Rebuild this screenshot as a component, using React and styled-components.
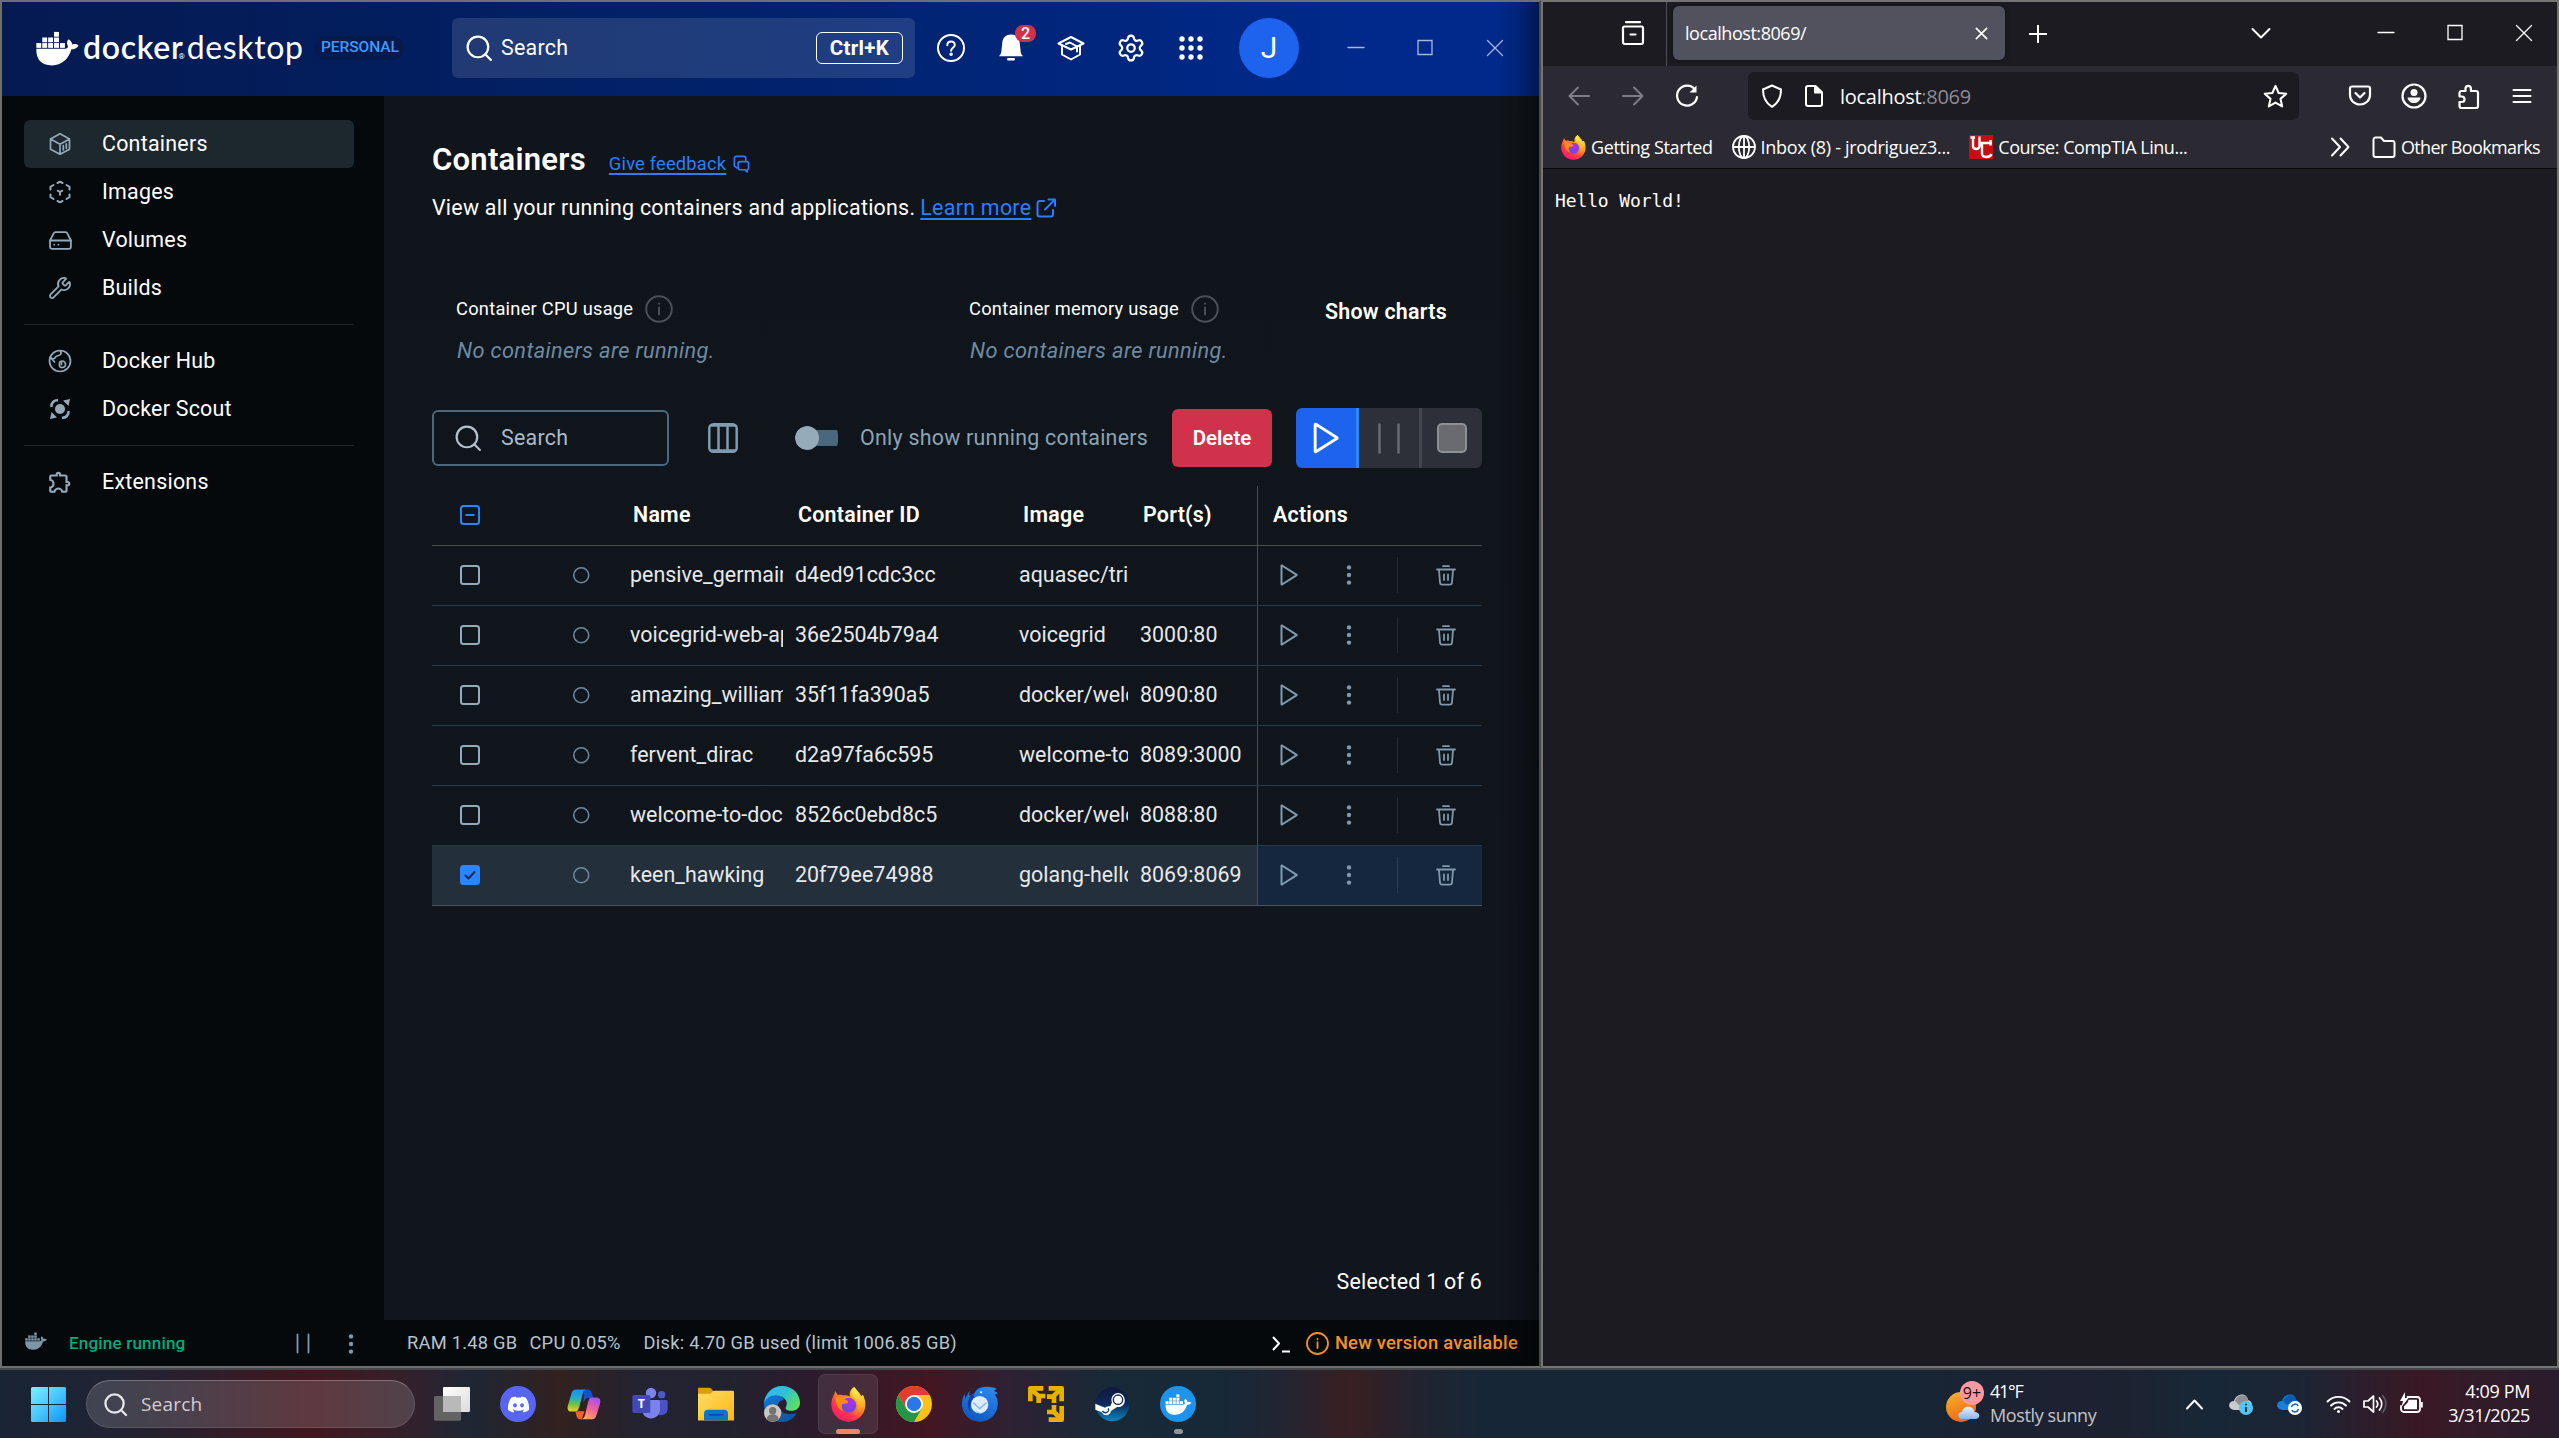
import React from "react";
import styled, { createGlobalStyle, css } from "styled-components";
import { Settings, HardDrive, Wrench } from "lucide-react";
import { MdOutlineExtension } from "react-icons/md";
import { FaDiscord } from "react-icons/fa";

const Global = createGlobalStyle`
  *, *::before, *::after { box-sizing: border-box; }
  html, body { margin: 0; padding: 0; background: #1c1b22; overflow: hidden; }
  svg { display: block; flex: none; overflow: visible; }
`;

const roboto = `Roboto, "Liberation Sans", sans-serif`;
const segoe = `"Open Sans", "Noto Sans", sans-serif`;

const Desktop = styled.div`
  width: 2559px;
  height: 1438px;
  display: grid;
  grid-template-columns: 1541px 1018px;
  grid-template-rows: 1368px 70px;
  overflow: hidden;
`;

const Label = styled.span`
  margin: 0;
  font-family: ${roboto};
  font-size: ${(p) => p.$size || 21.4}px;
  font-weight: ${(p) => p.$weight || 400};
  letter-spacing: ${(p) => (p.$track === undefined ? 0.25 : p.$track)}px;
  color: ${(p) => p.$color || "#fff"};
  line-height: 1;
  white-space: nowrap;
  font-style: ${(p) => (p.$italic ? "italic" : "normal")};
`;

const UiText = styled(Label)`
  font-family: ${segoe};
  font-size: ${(p) => p.$size || 18}px;
  letter-spacing: ${(p) => (p.$track === undefined ? -0.38 : p.$track)}px;
`;

/* ---------- Docker Desktop window ---------- */

const DockerWindow = styled.section`
  position: relative;
  display: grid;
  grid-template-rows: 94px 1224px 46px;
  border: 2px solid #6f6f6f;
  border-right-color: #4a4a4a;
  background: #05090c;
  &::after {
    content: "";
    position: absolute;
    inset: 0 0 0 auto;
    width: 44px;
    background: linear-gradient(to right, rgba(0, 0, 0, 0), rgba(0, 0, 0, 0.12) 50%, rgba(0, 0, 0, 0.42));
    pointer-events: none;
  }
`;

const TitleBar = styled.header`
  display: flex;
  align-items: center;
  padding-bottom: 2px;
  background: linear-gradient(to right, #051a50, #01226c 50%, #00298b 88%, #00298b);
`;

const Brand = styled.div`
  width: 450px;
  height: 60px;
  padding-left: 34px;
  display: flex;
  align-items: center;
`;

const Wordmark = styled.div`
  display: flex;
  align-items: baseline;
  margin: -3px 0 0 4px;
  color: #fff;
  font: 400 32px/1 Lato, sans-serif;
  letter-spacing: 0.6px;
  b { font-weight: 600; letter-spacing: 0.7px; }
  i { font: 400 8px/1 ${roboto}; margin: 0 2px 0 -5px; letter-spacing: 0; }
`;

const PlanPill = styled.div`
  margin-left: 12px;
  width: 89px;
  height: 24px;
  border-radius: 12px;
  background: #061a4b;
  display: flex;
  align-items: center;
  justify-content: center;
`;

const GlobalSearch = styled.div`
  width: 463px;
  height: 60px;
  padding: 0 12px 0 14px;
  border-radius: 6px;
  background: rgba(255, 255, 255, 0.12);
  display: flex;
  align-items: center;
  gap: 9px;
`;

const Shortcut = styled.kbd`
  margin-left: auto;
  width: 87px;
  height: 32px;
  border: 1.5px solid #fff;
  border-radius: 6px;
  display: flex;
  align-items: center;
  justify-content: center;
`;

const IconStrip = styled.div`
  display: flex;
  margin-left: 6px;
`;

const IconSlot = styled.div`
  position: relative;
  width: ${(p) => p.$width || 60}px;
  height: 40px;
  flex: none;
  display: flex;
  align-items: center;
  justify-content: center;
`;

const CountBadge = styled.div`
  position: absolute;
  left: 34px;
  top: -3px;
  width: 21px;
  height: 17px;
  border-radius: 8px;
  background: #d1324b;
  display: flex;
  align-items: center;
  justify-content: center;
`;

const Avatar = styled.div`
  width: 60px;
  height: 60px;
  margin: 0 22px 0 18px;
  border-radius: 50%;
  background: #1d63ed;
  display: flex;
  align-items: center;
  justify-content: center;
`;

const Body = styled.div`
  display: grid;
  grid-template-columns: 382px 1fr;
  min-height: 0;
`;

const Sidebar = styled.nav`
  padding: 24px 30px 0 22px;
`;

const NavItem = styled.div`
  height: 48px;
  padding-left: 24px;
  display: flex;
  align-items: center;
  gap: 30px;
  border-radius: 6px;
  color: #93a9ba;
  background: ${(p) => (p.$active ? "#1d272e" : "transparent")};
`;

const NavGlyph = styled.span`
  width: 24px;
  height: 24px;
  display: flex;
  align-items: center;
  justify-content: center;
`;

const NavDivider = styled.hr`
  height: 1px;
  margin: 12px 0;
  border: 0;
  background: #20262a;
`;

const Main = styled.main`
  display: flex;
  flex-direction: column;
  padding: 48px 57px 28px 48px;
  background: linear-gradient(#10151b, #11151d);
`;

const HeadingRow = styled.div`
  display: flex;
  align-items: baseline;
  height: 31px;
`;

const LinkText = styled(Label)`
  color: #2a7eff;
  text-decoration: underline;
  text-decoration-thickness: 1.5px;
  text-underline-offset: 3px;
`;

const FeedbackLink = styled.a`
  display: flex;
  align-items: center;
  gap: 6px;
  margin-left: 23px;
`;

const Subtitle = styled.div`
  margin-top: 22px;
  height: 21px;
  display: flex;
  align-items: center;
`;

const SubtitleLink = styled(LinkText)`
  margin: 0 5px 0 5px;
`;

const Stats = styled.div`
  margin-top: 77px;
  padding-left: 24px;
  display: grid;
  grid-template-columns: 513px 356px auto;
  align-items: start;
`;

const StatLabel = styled.div`
  height: 28px;
  display: flex;
  align-items: center;
  gap: 12px;
  margin-bottom: 17px;
`;

const StatBody = styled.div`
  display: flex;
  flex-direction: column;
  height: 66px;
`;

const EmptyNote = styled(Label)`
  padding-left: 1px;
`;

const ShowCharts = styled.button`
  padding: 6px 0 0;
  border: 0;
  background: none;
  text-align: left;
  line-height: 1;
  font-size: 21px;
`;

const Tools = styled.div`
  margin-top: 47px;
  height: 60px;
  display: flex;
  align-items: center;
`;

const TableSearch = styled.div`
  width: 237px;
  height: 56px;
  margin-right: 39px;
  padding-left: 21px;
  border: 2px solid #4a687e;
  border-radius: 6px;
  display: flex;
  align-items: center;
  gap: 20px;
`;

const Toggle = styled.div`
  width: 43px;
  height: 24px;
  margin: 0 22px 0 57px;
  display: flex;
  align-items: center;
  background: linear-gradient(#4a677e, #4a677e) right center / 34px 16px no-repeat;
  clip-path: inset(0 0 0 0 round 12px 8px 8px 12px);
  &::before {
    content: "";
    width: 24px;
    height: 24px;
    border-radius: 50%;
    background: #96abba;
  }
`;

const DeleteButton = styled.button`
  margin: 0 24px 0 auto;
  width: 100px;
  height: 58px;
  border: 0;
  border-radius: 6px;
  background: #d1324b;
  padding: 0;
`;

const RunGroup = styled.div`
  width: 186px;
  height: 60px;
  display: flex;
  border-radius: 6px;
  overflow: hidden;
`;

const RunButton = styled.div`
  flex: ${(p) => (p.$last ? "0 0 60px" : "0 0 63px")};
  display: flex;
  align-items: center;
  justify-content: center;
  background: ${(p) => (p.$primary ? "#1d63ed" : "#2d3038")};
  border-right: ${(p) => (p.$last ? "0" : p.$primary ? "3px solid #2e86ff" : "3px solid #42454c")};
`;

const Table = styled.div`
  margin-top: 18px;
`;

const gridRow = css`
  display: grid;
  grid-template-columns: 141px 57px 165px 224px 121px 117px 225px;
  height: 60px;
`;

const HeadRow = styled.div`
  ${gridRow}
  border-bottom: 1px solid #4a4f50;
`;

const Row = styled.div`
  ${gridRow}
  border-bottom: 1px solid ${(p) => (p.$selected ? "#4a5459" : "#253d4b")};
  background: ${(p) => (p.$selected ? "#232f3a" : "transparent")};
`;

const Cell = styled.div`
  display: flex;
  align-items: center;
  overflow: hidden;
  padding: 0 0 1px ${(p) => p.$indent || 0}px;
  margin-right: ${(p) => p.$clip || 0}px;
`;

const CheckCell = styled(Cell)`
  padding-left: 28px;
`;

const ActionCell = styled.div`
  display: flex;
  align-items: center;
  padding: 0 0 1px ${(p) => (p.$head ? 15 : 22)}px;
  border-left: 1px solid #484c4e;
  background: ${(p) => (p.$selected ? "#15263f" : "transparent")};
`;

const ActionPlay = styled.div`
  margin-right: 48px;
`;

const ActionRule = styled.div`
  width: 1px;
  height: 36px;
  margin: 0 38px 0 45px;
  background: ${(p) => (p.$selected ? "#2a3b4d" : "#222b30")};
`;

const Checkbox = styled.div`
  width: 20px;
  height: 20px;
  border-radius: 3.5px;
  border: 2px solid ${(p) => (p.$state === "off" ? "#96abba" : "#2a86ff")};
  background: ${(p) => (p.$state === "on" ? "#2a86ff" : "transparent")};
  display: flex;
  align-items: center;
  justify-content: center;
`;

const DataText = styled(Label).attrs({ $track: 0.02, $color: "#e6e9eb" })`
  line-height: 28px;
`;

const SelectedCount = styled.div`
  margin-top: auto;
  align-self: flex-end;
  display: flex;
`;

const StatusBar = styled.footer`
  display: grid;
  grid-template-columns: 382px 1fr;
  padding-top: 1px;
`;

const EngineStatus = styled.div`
  display: flex;
  align-items: center;
  padding-left: 23px;
  & > span { margin: 0 111px 0 22px; }
  & > svg:first-child { margin-top: -6px; }
`;

const ResourceStatus = styled.div`
  display: flex;
  align-items: center;
  padding: 0 21px 0 23px;
`;

const Metric = styled(Label)`
  margin-right: ${(p) => p.$gap}px;
`;

const UpdateNotice = styled.div`
  margin-left: auto;
  display: flex;
  align-items: center;
`;

const GroupGap = styled.div`
  display: flex;
  align-items: center;
  gap: 38px;
`;

const NoticeIcons = styled.div`
  display: flex;
  align-items: center;
  gap: 15px;
  margin-right: 6px;
`;

/* ---------- Firefox window ---------- */

const BrowserWindow = styled.section`
  display: grid;
  grid-template-rows: 64px 60px 43px 1fr;
  border: 2px solid #747474;
  background: #1c1b22;
`;

const TabBar = styled.div`
  display: flex;
  align-items: center;
  min-width: 0;
`;

const ViewButton = styled.div`
  width: 124px;
  height: 64px;
  padding: 0 0 2px 78px;
  display: flex;
  align-items: center;
  border-right: 1px solid #4f4e57;
`;

const Tab = styled.div`
  width: 332px;
  height: 54px;
  margin: 0 24px 2px 6px;
  padding: 0 18px 0 12px;
  border-radius: 6px;
  background: #52525e;
  box-shadow: 0 0 5px rgba(0, 0, 0, 0.5);
  display: flex;
  align-items: center;
  justify-content: space-between;
`;

const TabBarEnd = styled.div`
  margin: 0 -1px 2px auto;
  display: flex;
  align-items: center;
  & > svg { margin-right: 81px; }
`;

const NavBar = styled.div`
  display: flex;
  align-items: center;
  padding-left: 9px;
  background: #2b2a33;
`;

const UrlBar = styled.div`
  width: 551px;
  height: 48px;
  margin: 0 34px;
  padding: 0 11px 0 12px;
  border-radius: 6px;
  background: #1c1b22;
  display: flex;
  align-items: center;
  & > svg:last-child { margin-left: auto; }
`;

const LocationIcons = styled.div`
  display: flex;
  gap: 18px;
`;

const UrlText = styled(UiText)`
  margin: 2px 0 0 14px;
  span { color: #8c8b92; }
`;

const BookmarkBar = styled.div`
  display: flex;
  align-items: center;
  gap: 19px;
  padding: 0 17px 0 18px;
  background: #2b2a33;
  border-bottom: 1px solid #0b0b0e;
`;

const Bookmark = styled.div`
  display: flex;
  align-items: center;
  gap: 5px;
`;

const BookmarkEnd = styled.div`
  margin-left: auto;
  display: flex;
  align-items: center;
  gap: 22px;
`;

const Page = styled.pre`
  margin: 0;
  padding: 23px 12px;
  color: #fff;
  font: 400 18px/1 "DejaVu Sans Mono", monospace;
  letter-spacing: -0.12px;
`;

/* ---------- Taskbar ---------- */

const Taskbar = styled.footer`
  grid-column: 1 / -1;
  display: flex;
  align-items: center;
  padding: 0 29px 0 31px;
  border-top: 2px solid #45484d;
  background: linear-gradient(to right,
    #192435 0px, #202333 110px, #2c1f2c 190px, #43171f 310px, #35202a 400px,
    #1f2635 470px, #32211f 560px, #232332 640px, #22222f 730px, #2c1b2c 810px,
    #431622 930px, #2d2133 1010px, #182938 1110px, #172837 1220px, #222533 1280px,
    #381f22 1350px, #24232f 1410px, #172636 1480px, #162636 1900px, #1e2131 2060px,
    #1d2231 2120px, #172737 2210px, #1c2434 2300px, #3a1824 2420px, #321b29 2480px, #291c2c 2559px);
`;

const TaskSearch = styled.div`
  width: 329px;
  height: 48px;
  margin: 0 4px 0 20px;
  padding-left: 17px;
  border-radius: 24px;
  border: 1px solid rgba(255, 255, 255, 0.1);
  border-top-color: rgba(255, 255, 255, 0.25);
  background: rgba(255, 255, 255, 0.15);
  display: flex;
  align-items: center;
  gap: 14px;
`;

const TaskSlot = styled.div`
  position: relative;
  width: 66px;
  height: 60px;
  display: flex;
  align-items: center;
  justify-content: center;
  &::before {
    content: "";
    display: ${(p) => (p.$active ? "block" : "none")};
    position: absolute;
    inset: 0 3px;
    border-radius: 7px;
    border: 1px solid rgba(255, 255, 255, 0.07);
    background: rgba(255, 255, 255, 0.09);
  }
  &::after {
    content: "";
    display: ${(p) => (p.$active || p.$open ? "block" : "none")};
    position: absolute;
    bottom: 0;
    width: ${(p) => (p.$active ? 24 : 9)}px;
    height: 5px;
    border-radius: 3px;
    background: ${(p) => (p.$active ? "#f3836c" : "#8e959e")};
  }
  svg { position: relative; }
`;

const AppBadge = styled.div`
  width: 36px;
  height: 36px;
  border-radius: 50%;
  background: ${(p) => p.$color};
  color: #fff;
  display: flex;
  align-items: center;
  justify-content: center;
`;

const Weather = styled.div`
  margin-left: 735px;
  display: flex;
  align-items: center;
  gap: 4px;
`;

const TwoLines = styled.div`
  display: flex;
  flex-direction: column;
  align-items: ${(p) => (p.$end ? "flex-end" : "flex-start")};
  margin-top: -2px;
  & > span { line-height: 24px; }
`;

const Tray = styled.div`
  margin-left: auto;
  display: flex;
  align-items: center;
  & > svg { margin-right: 12px; }
  & > svg:nth-child(1) { margin-right: 26px; }
  & > svg:nth-child(2) { margin-right: 23px; }
  & > svg:nth-child(3) { margin-right: 24px; }
  & > svg:nth-child(6) { margin-right: 24px; }
`;

/* ---------- Icons ---------- */

const Line = ({ w = 24, h, vb = "0 0 24 24", s = 2, c = "#fff", children }) => (
  <svg width={w} height={h || w} viewBox={vb} fill="none" stroke={c} strokeWidth={s} strokeLinecap="round" strokeLinejoin="round">
    {children}
  </svg>
);

const Whale = ({ w = 43, h = 35, c = "#fff" }) => (
  <svg width={w} height={h} viewBox="47 58 131 105" fill={c}>
    {[[102, 60], [66, 77], [84, 77], [102, 77], [48, 94], [66, 94], [84, 94], [102, 94], [120, 94]].map(([x, y]) => (
      <rect key={`${x}-${y}`} x={x} y={y} width="15" height="14.5" />
    ))}
    <path d="M48 111.500H133C142 111 147 108 143 100C140 93 141 87 147 82C153 87 157 92 157 98C163 96 171 97 177 101C172 110 163 113 155 113C146 143 125 162 96 162C62 162 47 143 48 111.500Z" />
  </svg>
);

const SearchIcon = ({ size = 26, c = "#fff", s = 2 }) => (
  <Line w={size} c={c} s={s}><circle cx="11" cy="11" r="9.500" /><path d="M18 18l5 5" /></Line>
);
const BoxIcon = () => (
  <Line c="currentColor" s="1.700">
    <path d="M12 1.800L21.500 7v10.200L12 22.300 2.500 17.200V7zM2.500 7L12 12.200 21.500 7M12 12.200v10M15.300 13.500v4.500M18.300 11.800v4.500" />
  </Line>
);
const ImageIcon = () => (
  <Line c="currentColor" s="2">
    <path d="M9.500 3L12 1.700 14.500 3M18.500 5L21.500 6.800V9.500M21.500 14.500v2.700L18.500 19M14.500 21L12 22.300 9.500 21M5.500 19L2.500 17.200v-2.700M2.500 9.500V6.800L5.500 5M9.700 10.700L12 12l2.300-1.300M12 12v2.800" />
  </Line>
);
const HubIcon = () => (
  <Line c="currentColor" s="1.700">
    <circle cx="12" cy="12" r="10.500" /><path d="M2 8.500c3 2.500 5 1 5.500-.5S11 7 12.500 5.500 12.500 2.500 12 1.800M3 9l3.500 4M11.500 13.500c1-1.800 3.500-2 5-.5s1.500 4-.5 5-4.500.500-4.500-1.500z" /><path d="M13.500 13v2.500" />
  </Line>
);
const ScoutIcon = () => (
  <svg width="24" height="24" viewBox="0 0 24 24" fill="currentColor">
    <circle cx="12" cy="12" r="5" /><path d="M22 2l-1.500 7-5.500-5.500zM2 22l1.500-7L9 20.500z" />
    <path d="M3.500 10C3 6 6 3 10 3.200M20.500 14c.500 4-2.500 7-6.500 6.800" fill="none" stroke="currentColor" strokeWidth="2.600" />
  </svg>
);
const HelpIcon = () => (
  <Line w={28} vb="0 0 28 28" s="2"><circle cx="14" cy="14" r="13" /><path d="M10.300 11.200c0-5 7.600-4.800 7.500-.3 0 2.800-3.700 2.900-3.700 5.800" /><circle cx="14.100" cy="20.300" r=".8" fill="#fff" /></Line>
);
const BellIcon = () => (
  <svg width="26" height="28" viewBox="0 0 26 28" fill="#fff">
    <path d="M13 .5c5 0 8.200 3.200 8.700 8l1 9.500c.300 2 1.300 3 2.300 4.300H1C2 21 3 20 3.300 18l1-9.500C4.800 3.700 8 .5 13 .5z" /><rect x="9" y="24" width="8" height="2.500" rx="1.200" />
  </svg>
);
const LearnIcon = () => (
  <Line w={28} vb="0 0 28 28"><path d="M1.500 9.500L14 3l12.500 6.500L14 15.500zM5 12v8.500L14 25.500l9-5V12M13 8.500l7 4v5M9 10l4-1.500" /></Line>
);
const AppsIcon = () => (
  <svg width="24" height="24" viewBox="0 0 24 24" fill="#fff">
    {[3, 12, 21].map((y) => [3, 12, 21].map((x) => <circle key={`${x}-${y}`} cx={x} cy={y} r="2.700" />))}
  </svg>
);
const InfoIcon = ({ size = 28, c = "#4b5054", s = 2 }) => (
  <Line w={size} vb="0 0 28 28" c={c} s={s}><circle cx="14" cy="14" r="12.800" /><path d="M14 12.500V19.500M14 8.500v.3" /></Line>
);
const FeedbackIcon = () => (
  <Line w={18} vb="0 0 19 19" c="#2a7eff" s="1.700"><path d="M5 13.500L2.500 11.500V3.500a2 2 0 0 1 2-2h8a2 2 0 0 1 2 2v2.500M8.500 7h7a2 2 0 0 1 2 2v5a2 2 0 0 1-1.500 1.500V18l-2.500-2.500h-5A2 2 0 0 1 6.500 13.500V9a2 2 0 0 1 2-2z" /></Line>
);
const ExternalIcon = () => (
  <Line w={20} vb="0 0 20 20" c="#2a7eff" s="2"><path d="M8 3H3.500A2 2 0 0 0 1.500 5v11.500a2 2 0 0 0 2 2H15a2 2 0 0 0 2-2V12M12.500 1.500H19V8M18.500 2L9 11.500" /></Line>
);
const ColumnsIcon = () => (
  <Line w={30} vb="0 0 30 30" c="#7f9bb0" s="2.500"><rect x="1.300" y="1.300" width="27.400" height="27.400" rx="4" /><path d="M10.500 2v26M19.500 2v26M3 2.500h24M3 27.500h24" /></Line>
);
const PlayIcon = ({ w = 18, h = 22, c = "#7f9bb0", s = 2 }) => (
  <Line w={w} h={h} vb="0 0 18 22" c={c} s={s}><path d="M1.500 1.800v18.400c0 .3.300.4.500.3L16.700 11.200a.3.300 0 0 0 0-.4L2 1.500c-.2-.1-.5 0-.5.3z" /></Line>
);
const PauseIcon = ({ w = 22, h = 31, c = "#696c72", s = 2.5 }) => (
  <Line w={w} h={h} vb={`0 0 ${w} ${h}`} c={c} s={s}><path d={`M1.500 1.500V${h - 1.5}M${w - 1.5} 1.500V${h - 1.5}`} /></Line>
);
const DotsIcon = ({ h = 20 }) => (
  <svg width="6" height={h} viewBox={`0 0 6 ${h}`} fill="#8098aa">
    {[2.4, h / 2, h - 2.4].map((y) => <circle key={y} cx="3" cy={y} r="2.200" />)}
  </svg>
);
const TrashIcon = () => (
  <Line w={20} h={21} vb="0 0 20 21" c="#8098aa" s="1.800"><path d="M1 4.500h18M7 1.200h6M3 5l1 12.500a2.300 2.300 0 0 0 2.300 2.200h7.400A2.300 2.300 0 0 0 16 17.500L17 5M8 9.500v5.500M12 9.500v5.500" /></Line>
);
const PromptIcon = () => (
  <Line w={20} h={18} vb="0 0 20 18" s="2"><path d="M2 2l6 6.500L2 15M11 16.500h8" strokeLinecap="butt" /></Line>
);

const WinMin = ({ w = 16, c = "#fff" }) => <Line w={w} vb="0 0 16 16" c={c} s="1.300"><path d="M0 7.500h16" /></Line>;
const WinMax = ({ w = 16, c = "#fff" }) => <Line w={w} vb="0 0 16 16" c={c} s="1.300"><path d="M1 .5h14v14H1z" strokeLinejoin="miter" /></Line>;
const WinClose = ({ w = 16, c = "#fff", s = 1.3 }) => <Line w={w} vb="0 0 16 16" c={c} s={s}><path d="M.5.5l15 15M15.500.5l-15 15" /></Line>;

const FirefoxLogo = ({ size = 35, id }) => (
  <svg width={size} height={size} viewBox="-1 0 104 104">
    <defs>
      <linearGradient id={`${id}a`} x1=".9" y1="0" x2=".2" y2="1"><stop offset=".1" stopColor="#ffe14a" /><stop offset=".4" stopColor="#ff980e" /><stop offset=".7" stopColor="#ff3750" /><stop offset="1" stopColor="#f5156c" /></linearGradient>
      <linearGradient id={`${id}b`} x1="0" y1="0" x2="0" y2="1"><stop offset="0" stopColor="#fff44f" /><stop offset=".6" stopColor="#ffb52b" /><stop offset="1" stopColor="#ff6a3a" /></linearGradient>
      <radialGradient id={`${id}c`} cx=".6" cy=".3" r=".8"><stop offset="0" stopColor="#b02ee8" /><stop offset="1" stopColor="#5b4fe0" /></radialGradient>
    </defs>
    <path fill={`url(#${id}a)`} d="M68 0C74 10 84 16 89 28L94 24C100 36 102 46 101 56C99 84 77 103 51 103C22 103 0 80 0 52C0 40 3 32 8 22L12 12C14 18 17 21 20 24C26 22 32 22 36 26C44 22 50 28 56 28C52 16 58 6 68 0Z" />
    <path fill={`url(#${id}b)`} d="M68 0C58 10 58 22 68 32C84 46 84 70 64 84C92 78 104 52 94 24L89 28C84 16 74 10 68 0Z" />
    <circle cx="52" cy="54" r="22" fill={`url(#${id}c)`} />
    <path fill="#ff8a16" d="M14 27C24 28 36 32 50 42C50 48 44 50 34 50C28 56 30 66 38 74C20 68 10 50 14 27Z" />
  </svg>
);

const ShieldIcon = () => <Line w={24} vb="0 0 24 24"><path d="M12 1.500l9 4c0 8-2.500 13.500-9 17.300C5.500 19 3 13.500 3 5.500z" /></Line>;
const DocIcon = () => <Line w={24} vb="0 0 24 24"><path d="M13 2H6a2 2 0 0 0-2 2v16a2 2 0 0 0 2 2h12a2 2 0 0 0 2-2V8.500L13.500 2z" /><path d="M13 2v6.500h7z" fill="#fff" /></Line>;
const StarIcon = () => <Line w={25}><path d="M12 1.800l3 6.800 7.300.8-5.500 4.900 1.600 7.200L12 17.800l-6.400 3.700 1.600-7.200L1.700 9.400 9 8.600z" /></Line>;
const BackIcon = () => <Line w={22} vb="0 0 22 22" c="#7e7d86"><path d="M21 11H2M10 2.500L1.500 11l8.500 8.500" /></Line>;
const ForwardIcon = () => <Line w={22} vb="0 0 22 22" c="#7e7d86"><path d="M1 11h19M12 2.500l8.500 8.500-8.500 8.500" /></Line>;
const ReloadIcon = () => <Line w={24} s="2.200"><path d="M20 5.500A10 10 0 1 0 22 13" /><path d="M21.500 1.500v7h-7z" fill="#fff" stroke="none" /></Line>;
const PocketIcon = () => <Line w={24} s="2.200"><path d="M4 2.500h16a2 2 0 0 1 2 2V11a10 9.500 0 0 1-20 0V4.500a2 2 0 0 1 2-2zM7.500 9l4.500 4.500L16.500 9" /></Line>;
const AccountIcon = () => <Line w={26} vb="0 0 26 26" s="2.200"><circle cx="13" cy="13" r="11.500" /><circle cx="13" cy="9.500" r="3.500" fill="#fff" stroke="none" /><path d="M6.500 14.500h13c-.5 3.500-3 5.500-6.500 5.500s-6-2-6.500-5.500z" fill="#fff" stroke="none" /></Line>;
const AddonIcon = () => <Line w={25} vb="0 0 25 25" s="2.200"><path d="M9.500 7V4.500a2.700 2.700 0 0 1 5.400 0V7H20a2 2 0 0 1 2 2v13a2 2 0 0 1-2 2H5.500a2 2 0 0 1-2-2v-4h2.300a2.700 2.700 0 0 0 0-5.500H3.500V9a2 2 0 0 1 2-2z" /></Line>;
const MenuIcon = () => <Line w={20} vb="0 0 20 20"><path d="M1.500 4h17M1.500 10h17M1.500 16h17" /></Line>;
const GlobeIcon = () => <Line w={24} s="1.800"><circle cx="12" cy="12" r="11" /><ellipse cx="12" cy="12" rx="5.200" ry="11" /><path d="M1.500 12h21M12 1v22" /></Line>;
const FolderLine = () => <Line w={24}><path d="M1.500 20V4.500a2 2 0 0 1 2-2h5.500L12 6h8.500a2 2 0 0 1 2 2v12a2 2 0 0 1-2 2h-17a2 2 0 0 1-2-2z" /></Line>;
const CourseIcon = () => (
  <svg width="24" height="24" viewBox="0 0 24 24"><path fill="#c90d13" d="M0 0h24v24H0z" /><path d="M1.500 2.500H6M4 2.500v8.500c0 4 6.500 4 6.500 0V1.500M10 8h13M13 8.500v10c0 4.500 8 4.500 9.500.5M21.500 5v5.500" fill="none" stroke="#fff" strokeWidth="2.400" /></svg>
);

/* taskbar artwork */
const WindowsLogo = () => (
  <svg width="35" height="35" viewBox="0 0 35 35">
    <defs><linearGradient id="win" x1="0" y1="0" x2="1" y2="1"><stop offset="0" stopColor="#7ef0ff" /><stop offset=".5" stopColor="#48c6ff" /><stop offset="1" stopColor="#0a95f8" /></linearGradient></defs>
    <path fill="url(#win)" d="M1.500 0H17v17H0V1.500A1.500 1.500 0 0 1 1.500 0zM18 0h15.500A1.500 1.500 0 0 1 35 1.500V17H18zM0 18h17v17H1.500A1.500 1.500 0 0 1 0 33.500zM18 18h17v15.500a1.500 1.500 0 0 1-1.500 1.500H18z" />
  </svg>
);
const TaskView = () => (
  <svg width="36" height="36" viewBox="42 42 108 108">
    <defs><linearGradient id="tv" x1="0" y1="0" x2="1" y2="1"><stop offset="0" stopColor="#fff" /><stop offset="1" stopColor="#dcdcdc" /></linearGradient></defs>
    <rect x="42" y="72" width="81" height="74" rx="4" fill="#636363" /><rect x="69" y="45" width="81" height="75" rx="4" fill="url(#tv)" /><path d="M69 72h54v48H69z" fill="#b9b9b9" />
  </svg>
);
const Copilot = () => (
  <svg width="34" height="31" viewBox="-1 -1 103 93">
    <defs>
      <linearGradient id="cp1" x1=".4" y1="0" x2=".3" y2="1"><stop offset="0" stopColor="#1a8df0" /><stop offset=".4" stopColor="#22b0c8" /><stop offset=".65" stopColor="#6cc04a" /><stop offset="1" stopColor="#f2cf1c" /></linearGradient>
      <linearGradient id="cp2" x1=".7" y1="0" x2=".3" y2="1"><stop offset="0" stopColor="#a04ff0" /><stop offset=".5" stopColor="#f0619a" /><stop offset="1" stopColor="#ffa45c" /></linearGradient>
    </defs>
    <path fill="#1551c8" d="M50 0h12c8 0 11 6 13 13l4 13H64c-9 0-12 6-15 16z" />
    <path fill="#f3602f" d="M24 66h28l-8 24h-6c-7 0-9-6-11-13z" />
    <path fill="url(#cp1)" d="M26 0h34c-9 0-12 7-14 15L36 54c-3 10-7 13-15 13H11C1 67-1 58 2 48L13 11C15 4 19 0 26 0z" />
    <path fill="url(#cp2)" d="M74 24h14c11 0 14 9 11 19L88 79c-2 7-6 11-13 11H41c8 0 11-6 13-14l9-38c3-10 5-14 11-14z" />
  </svg>
);
const Teams = () => (
  <svg width="36" height="34" viewBox="635 46 108 100">
    <circle cx="724" cy="68" r="11" fill="#5059c9" /><path d="M712 84h26a4 4 0 0 1 4 4v23a19 19 0 0 1-30 15z" fill="#4a53c2" />
    <circle cx="692" cy="63" r="15.500" fill="#7b83eb" /><path d="M666 84h48a5 5 0 0 1 5 5v27a27 27 0 0 1-53 3z" fill="#7b83eb" />
    <rect x="636" y="69" width="54" height="54" rx="5" fill="#4349b4" />
    <text x="663" y="109" fontFamily="Open Sans, sans-serif" fontWeight="700" fontSize="37" fill="#fff" textAnchor="middle">T</text>
  </svg>
);
const Explorer = () => (
  <svg width="36" height="34" viewBox="834 46 108 101">
    <defs><linearGradient id="fo" x1="0" y1="0" x2="1" y2="1"><stop offset="0" stopColor="#ffdd66" /><stop offset="1" stopColor="#fdb813" /></linearGradient></defs>
    <path fill="#e09d09" d="M838 48h28c4 0 6 1 9 4l5 6v14h-46V52c0-3 1-4 4-4z" /><path fill="url(#fo)" d="M834 66h36c5 0 6-9 12-9h56c3 0 4 1 4 4v85H834z" />
    <path fill="#0f74c8" d="M852 146v-20c0-8 4-12 12-12h48c8 0 12 4 12 12v20z" /><path d="M868 129h40" stroke="#0a4f96" strokeWidth="5" strokeLinecap="round" />
  </svg>
);
const Edge = () => (
  <svg width="36" height="36" viewBox="0 0 108 108">
    <defs>
      <linearGradient id="ed1" x1="0" y1=".2" x2="1" y2=".7"><stop offset="0" stopColor="#35b8f0" /><stop offset=".5" stopColor="#2fc0d6" /><stop offset="1" stopColor="#63e05a" /></linearGradient>
      <linearGradient id="ed2" x1="0" y1="0" x2="1" y2="1"><stop offset="0" stopColor="#1578d6" /><stop offset="1" stopColor="#0f4f96" /></linearGradient>
    </defs>
    <path fill="url(#ed2)" d="M0 54C2 30 22 22 40 26C56 30 60 38 58 42C44 44 38 56 44 68C52 82 76 88 98 82C88 100 72 108 54 108C22 108 0 84 0 54Z" />
    <path fill="url(#ed1)" d="M0 52C2 22 26 0 54 0C86 0 108 24 108 50C108 66 96 74 82 74C68 74 62 68 66 62C72 50 66 36 48 30C28 24 8 32 0 52Z" />
    <circle cx="26" cy="81" r="26" fill="#c9c7c4" /><circle cx="26" cy="74" r="11" fill="#77736f" /><path d="M8 100c1-20 35-20 36 0-9 9-27 9-36 0z" fill="#77736f" />
  </svg>
);
const Chrome = () => (
  <svg width="36" height="36" viewBox="-54 -54 108 108">
    <circle r="54" fill="#fbc116" /><path fill="#e33b2e" d="M-46.800-27A54 54 0 0 1 46.800-27H0L-23.400 13.500z" /><path fill="#239648" d="M-46.800-27A54 54 0 0 0 0 54L23.400 13.500 0 27-23.400 13.500z" />
    <circle r="27" fill="#fff" /><circle r="21.500" fill="#2a77ea" />
  </svg>
);
const Thunderbird = () => (
  <svg width="36" height="36" viewBox="0 0 108 108">
    <defs><linearGradient id="tb" x1=".8" y1="0" x2=".3" y2="1"><stop offset="0" stopColor="#2a8af0" /><stop offset="1" stopColor="#0f56c2" /></linearGradient></defs>
    <path fill="url(#tb)" d="M42 14C54 0 80 0 104 8L96 14L108 22L98 26C108 36 110 54 104 72C96 94 76 107 54 107C24 107 4 88 0 60C-1 46 2 34 8 24L10 38L22 14L22 30C28 26 32 24 34 26Z" />
    <path fill="#0f3f9e" d="M30 24C14 40 14 64 26 80C22 60 26 46 38 34z" />
    <circle cx="53" cy="56" r="26" fill="#dcecfb" /><path d="M34 50l19 18 20-18" fill="none" stroke="#7fb2e8" strokeWidth="4" /><path fill="#a9cdf4" d="M40 70c6 8 14 10 22 14-10 0-20-4-22-14z" /><circle cx="57" cy="19" r="3" fill="#fff" />
  </svg>
);
const VMware = () => (
  <svg width="36" height="36" viewBox="0 0 108 108" fill="none" stroke="#eab000" strokeWidth="14" strokeLinejoin="round">
    <path d="M7 46V7H46M7 7L40 38M32 51V30H52" /><path d="M62 7H101V46M101 7L70 36M57 32H78V51" /><path d="M101 60V101H62M101 101L72 72M57 78H78V57" />
  </svg>
);
const Steam = () => (
  <svg width="35" height="35" viewBox="0 0 105 105">
    <defs><linearGradient id="st" x1="0" y1="0" x2="0" y2="1"><stop offset="0" stopColor="#11173c" /><stop offset=".5" stopColor="#0d2a5c" /><stop offset="1" stopColor="#0c87bd" /></linearGradient></defs>
    <circle cx="52" cy="52" r="51" fill="url(#st)" /><path d="M1 50L30 62C36 58 42 58 46 58L54 38C60 26 82 24 88 38C92 54 76 62 66 60L48 72C46 86 28 90 20 76L1 68z" fill="#fff" />
    <circle cx="69" cy="38" r="20" fill="#fff" /><circle cx="69" cy="38" r="14" fill="#fff" stroke="#17254f" strokeWidth="4" /><path d="M22 72c8 10 22 4 18-8" fill="none" stroke="#17406e" strokeWidth="4" />
  </svg>
);
const WeatherIcon = () => (
  <svg width="40" height="44" viewBox="0 0 40 44">
    <defs><linearGradient id="sun" x1="0" y1="0" x2=".4" y2="1"><stop offset="0" stopColor="#f8b52c" /><stop offset="1" stopColor="#ee6a17" /></linearGradient><linearGradient id="cl" x1="0" y1="0" x2="0" y2="1"><stop offset="0" stopColor="#e6f0fc" /><stop offset="1" stopColor="#8fb4ea" /></linearGradient></defs>
    <ellipse cx="15" cy="25" rx="15" ry="15" fill="url(#sun)" /><path d="M16 37c-5 0-5-7 0-7 1-7 12-7 12 0 7 0 7 7 1 7z" fill="url(#cl)" />
    <circle cx="26" cy="11" r="12" fill="#ff98a0" /><text x="26" y="16.500" fontFamily="Open Sans, sans-serif" fontSize="16" textAnchor="middle" fill="#1a1014">9+</text>
  </svg>
);
const CloudIcon = ({ a, b, children }) => (
  <svg width="25" height="22" viewBox="0 0 25 22">
    <path d="M5 17c-7-1-6-9 0-9C7 0 18-1 19 7c5 1 6 9 0 10z" fill={a} /><path d="M6 8c3-8 13-7 13 0l-9 4z" fill={b} />{children}
  </svg>
);
const WifiIcon = () => <Line w={25} h={20} vb="0 0 25 20" s="1.900"><path d="M1.500 7.500a15.500 15.500 0 0 1 22 0M5 11.500a10.500 10.500 0 0 1 15 0M8.500 15a5.500 5.500 0 0 1 8 0" /><circle cx="12.500" cy="17.500" r="1.500" fill="#fff" stroke="none" /></Line>;
const VolumeIcon = () => <Line w={24} h={20} vb="0 0 24 20" s="1.700"><path d="M1 7v6h4l5.500 5V2L5 7zM13.500 7c1.500 1.800 1.500 4.200 0 6M16.500 4c3 3.500 3 8.500 0 12" /><path d="M19.500 1.500c4.500 5 4.500 12 0 17" stroke="#5a5563" /></Line>;
const BatteryIcon = () => <Line w={25} h={22} vb="0 0 25 22" s="1.800"><path d="M8.500 4h9.500a3 3 0 0 1 3 3v9a3 3 0 0 1-3 3H5a3 3 0 0 1-3-3v-3" /><path d="M9.500 6.800H18v9.400H5V13.500l4-4.500zM22 9h1.800v5.500H22zM6 -1L1 8h3l-1.500 6L9.500 5H6z" fill="#fff" stroke="none" /></Line>;

/* ---------- Content ---------- */

const rows = [
  { name: "pensive_germain", id: "d4ed91cdc3cc", image: "aquasec/tri", port: "" },
  { name: "voicegrid-web-ap", id: "36e2504b79a4", image: "voicegrid", port: "3000:80" },
  { name: "amazing_william", id: "35f11fa390a5", image: "docker/welc", port: "8090:80" },
  { name: "fervent_dirac", id: "d2a97fa6c595", image: "welcome-to", port: "8089:3000" },
  { name: "welcome-to-doc", id: "8526c0ebd8c5", image: "docker/welc", port: "8088:80" },
  { name: "keen_hawking", id: "20f79ee74988", image: "golang-hello", port: "8069:8069", selected: true },
];

const NavEntry = ({ icon, text, active }) => (
  <NavItem $active={active}><NavGlyph>{icon}</NavGlyph><Label>{text}</Label></NavItem>
);

const Stat = ({ title }) => (
  <StatBody>
    <StatLabel><Label $size={18.3}>{title}</Label><InfoIcon /></StatLabel>
    <EmptyNote $italic $size={21.8} $color="#6c8ba3" $track={0.35}>No containers are running.</EmptyNote>
  </StatBody>
);

const ContainerRow = ({ name, id, image, port, selected }) => (
  <Row $selected={selected}>
    <CheckCell>
      <Checkbox $state={selected ? "on" : "off"}>
        {selected && <Line w={12} vb="0 0 12 12" c="#1c2f42" s="2"><path d="M1.500 6.500l3 3L10.500 3" /></Line>}
      </Checkbox>
    </CheckCell>
    <Cell><Line w={16.5} vb="0 0 17 17" c="#6c8ba3" s="1.600"><circle cx="8.500" cy="8.500" r="7.700" /></Line></Cell>
    <Cell $clip={12}><DataText>{name}</DataText></Cell>
    <Cell><DataText>{id}</DataText></Cell>
    <Cell $clip={12}><DataText>{image}</DataText></Cell>
    <Cell><DataText>{port}</DataText></Cell>
    <ActionCell $selected={selected}>
      <ActionPlay><PlayIcon /></ActionPlay>
      <DotsIcon />
      <ActionRule $selected={selected} />
      <TrashIcon />
    </ActionCell>
  </Row>
);

export default function App() {
  return (
    <Desktop>
      <Global />
      <DockerWindow>
        <TitleBar>
          <Brand>
            <Whale />
            <Wordmark><b>docker</b><i>®</i>desktop</Wordmark>
            <PlanPill><Label $size={15.5} $weight={500} $track={-0.05} $color="#3f9bff">PERSONAL</Label></PlanPill>
          </Brand>
          <GlobalSearch>
            <SearchIcon />
            <Label>Search</Label>
            <Shortcut><Label $size={20.5} $weight={700} $track={0.3}>Ctrl+K</Label></Shortcut>
          </GlobalSearch>
          <IconStrip>
            <IconSlot><HelpIcon /></IconSlot>
            <IconSlot><BellIcon /><CountBadge><Label $size={16} $weight={500} $track={0}>2</Label></CountBadge></IconSlot>
            <IconSlot><LearnIcon /></IconSlot>
            <IconSlot><Settings size={30} color="#fff" strokeWidth={1.8} /></IconSlot>
            <IconSlot><AppsIcon /></IconSlot>
          </IconStrip>
          <Avatar><Label $size={30} $track={0}>J</Label></Avatar>
          <IconSlot $width={69.5}><WinMin c="#a9b6da" /></IconSlot>
          <IconSlot $width={69.5}><WinMax c="#a9b6da" /></IconSlot>
          <IconSlot $width={69.5}><WinClose c="#a9b6da" /></IconSlot>
        </TitleBar>

        <Body>
          <Sidebar>
            <NavEntry active icon={<BoxIcon />} text="Containers" />
            <NavEntry icon={<ImageIcon />} text="Images" />
            <NavEntry icon={<HardDrive size={25} strokeWidth={1.7} />} text="Volumes" />
            <NavEntry icon={<Wrench size={24} strokeWidth={1.8} />} text="Builds" />
            <NavDivider />
            <NavEntry icon={<HubIcon />} text="Docker Hub" />
            <NavEntry icon={<ScoutIcon />} text="Docker Scout" />
            <NavDivider />
            <NavEntry icon={<MdOutlineExtension size={26} />} text="Extensions" />
          </Sidebar>

          <Main>
            <HeadingRow>
              <Label as="h1" $size={31} $weight={600} $track={0.25}>Containers</Label>
              <FeedbackLink><LinkText $size={18.3} $track={0.2}>Give feedback</LinkText><FeedbackIcon /></FeedbackLink>
            </HeadingRow>
            <Subtitle>
              <Label>View all your running containers and applications.</Label>
              <SubtitleLink $track={0.28}>Learn more</SubtitleLink>
              <ExternalIcon />
            </Subtitle>
            <Stats>
              <Stat title="Container CPU usage" />
              <Stat title="Container memory usage" />
              <ShowCharts><Label $weight={600}>Show charts</Label></ShowCharts>
            </Stats>
            <Tools>
              <TableSearch><SearchIcon c="#b3c1cc" size={26} /><Label $color="#a8bbca">Search</Label></TableSearch>
              <ColumnsIcon />
              <Toggle />
              <Label $color="#8ba4b6">Only show running containers</Label>
              <DeleteButton><Label $size={20.5} $weight={600} $track={0}>Delete</Label></DeleteButton>
              <RunGroup>
                <RunButton $primary><PlayIcon w={26} h={32} c="#fff" s={2} /></RunButton>
                <RunButton><PauseIcon /></RunButton>
                <RunButton $last><Line w={30} vb="0 0 30 30" c="#8d9095" s="2"><rect x="1" y="1" width="28" height="28" rx="4" fill="#696b70" /></Line></RunButton>
              </RunGroup>
            </Tools>
            <Table>
              <HeadRow>
                <CheckCell><Checkbox $state="some"><Line w={12} vb="0 0 12 12" c="#2a86ff" s="2"><path d="M1.500 6h9" strokeLinecap="butt" /></Line></Checkbox></CheckCell>
                <Cell />
                <Cell $indent={3}><Label $weight={600}>Name</Label></Cell>
                <Cell $indent={3}><Label $weight={600}>Container ID</Label></Cell>
                <Cell $indent={4}><Label $weight={600}>Image</Label></Cell>
                <Cell $indent={3}><Label $weight={600}>Port(s)</Label></Cell>
                <ActionCell $head><Label $weight={600}>Actions</Label></ActionCell>
              </HeadRow>
              {rows.map((r) => <ContainerRow key={r.id} {...r} />)}
            </Table>
            <SelectedCount><Label>Selected 1 of 6</Label></SelectedCount>
          </Main>
        </Body>

        <StatusBar>
          <EngineStatus>
            <Whale w={22} h={18} c="#7d95a8" />
            <Label $size={17} $weight={500} $track={0.2} $color="#06a77f">Engine running</Label>
            <GroupGap><PauseIcon w={14} h={21} c="#8098aa" s={1.8} /><DotsIcon h={20} /></GroupGap>
          </EngineStatus>
          <ResourceStatus>
            <Metric $size={18.3} $gap={12} $color="#b6c3cd">RAM 1.48 GB</Metric>
            <Metric $size={18.3} $gap={23} $color="#b6c3cd">CPU 0.05%</Metric>
            <Metric $size={18.3} $gap={0} $color="#b6c3cd">Disk: 4.70 GB used (limit 1006.85 GB)</Metric>
            <UpdateNotice>
              <NoticeIcons><PromptIcon /><InfoIcon size={23} c="#f5921e" s={2.2} /></NoticeIcons>
              <Label $size={18.3} $weight={500}  $track={0.26} $color="#f5921e">New version available</Label>
            </UpdateNotice>
          </ResourceStatus>
        </StatusBar>
      </DockerWindow>

      <BrowserWindow>
        <TabBar>
          <ViewButton>
            <Line w={24} vb="0 0 24 24" s="2.200"><path d="M5 1.200h14M3.500 5.500h17a1.500 1.500 0 0 1 1.500 1.500v14a2 2 0 0 1-2 2H4a2 2 0 0 1-2-2V7a1.500 1.500 0 0 1 1.500-1.500zM9.500 13.500h5" /></Line>
          </ViewButton>
          <Tab><UiText $track={-0.45}>localhost:8069/</UiText><WinClose w={11} s={2.4} /></Tab>
          <Line w={18} vb="0 0 18 18" s="2"><path d="M9 0v18M0 9h18" strokeLinecap="butt" /></Line>
          <TabBarEnd>
            <Line w={18} vb="0 0 18 18" s="2"><path d="M.5 5L9 13.500 17.500 5" /></Line>
            <IconSlot $width={69}><WinMin /></IconSlot>
            <IconSlot $width={69}><WinMax /></IconSlot>
            <IconSlot $width={69}><WinClose /></IconSlot>
          </TabBarEnd>
        </TabBar>
        <NavBar>
          <IconSlot $width={54}><BackIcon /></IconSlot>
          <IconSlot $width={54}><ForwardIcon /></IconSlot>
          <IconSlot $width={54}><ReloadIcon /></IconSlot>
          <UrlBar>
            <LocationIcons><ShieldIcon /><DocIcon /></LocationIcons>
            <UrlText $size={20} $track={-0.28}>localhost<span>:8069</span></UrlText>
            <StarIcon />
          </UrlBar>
          <IconSlot $width={54}><PocketIcon /></IconSlot>
          <IconSlot $width={54}><AccountIcon /></IconSlot>
          <IconSlot $width={54}><AddonIcon /></IconSlot>
          <IconSlot $width={54}><MenuIcon /></IconSlot>
        </NavBar>
        <BookmarkBar>
          <Bookmark><FirefoxLogo size={25} id="fxb" /><UiText>Getting Started</UiText></Bookmark>
          <Bookmark><GlobeIcon /><UiText $track={-0.3}>Inbox (8) - jrodriguez3...</UiText></Bookmark>
          <Bookmark><CourseIcon /><UiText $track={-0.47}>Course: CompTIA Linu...</UiText></Bookmark>
          <BookmarkEnd>
            <Line w={20} vb="0 0 20 20" s="2"><path d="M2 1.500l8 8.500-8 8.500M10.500 1.500l8 8.500-8 8.500" /></Line>
            <Bookmark><FolderLine /><UiText $track={-0.62}>Other Bookmarks</UiText></Bookmark>
          </BookmarkEnd>
        </BookmarkBar>
        <Page>Hello World!</Page>
      </BrowserWindow>

      <Taskbar>
        <WindowsLogo />
        <TaskSearch>
          <SearchIcon size={23} c="#e8e6e8" s={2.4} />
          <UiText $size={19} $track={0.2} $color="#d3cdd0">Search</UiText>
        </TaskSearch>
        <TaskSlot><TaskView /></TaskSlot>
        <TaskSlot><AppBadge $color="#5865f2"><FaDiscord size={23} /></AppBadge></TaskSlot>
        <TaskSlot><Copilot /></TaskSlot>
        <TaskSlot><Teams /></TaskSlot>
        <TaskSlot><Explorer /></TaskSlot>
        <TaskSlot><Edge /></TaskSlot>
        <TaskSlot $active><FirefoxLogo id="fxt" /></TaskSlot>
        <TaskSlot><Chrome /></TaskSlot>
        <TaskSlot><Thunderbird /></TaskSlot>
        <TaskSlot><VMware /></TaskSlot>
        <TaskSlot><Steam /></TaskSlot>
        <TaskSlot $open><AppBadge $color="#1d93ec"><Whale w={27} h={21} /></AppBadge></TaskSlot>
        <Weather>
          <WeatherIcon />
          <TwoLines><UiText $track={-1.3}>41°F</UiText><UiText $color="#c3c4c9">Mostly sunny</UiText></TwoLines>
        </Weather>
        <Tray>
          <Line w={17} h={17} vb="0 0 17 17" s="2"><path d="M1 12.500L8.500 4.500 16 12.500" /></Line>
          <CloudIcon a="#c9cbcd" b="#8d9093"><circle cx="17" cy="15" r="7" fill="#56c3f5" /><path d="M17 14v5M17 10.700v1.500" stroke="#0b2f4a" strokeWidth="1.800" /></CloudIcon>
          <CloudIcon a="#1482dd" b="#0a5cb3"><circle cx="18" cy="15" r="7" fill="#fff" /><path d="M14.500 14a3.800 3.800 0 0 1 6.800-1.200M21.500 16a3.800 3.800 0 0 1-6.800 1.200" fill="none" stroke="#1a6fc0" strokeWidth="1.600" /></CloudIcon>
          <WifiIcon />
          <VolumeIcon />
          <BatteryIcon />
          <TwoLines $end><UiText>4:09 PM</UiText><UiText>3/31/2025</UiText></TwoLines>
        </Tray>
      </Taskbar>
    </Desktop>
  );
}
